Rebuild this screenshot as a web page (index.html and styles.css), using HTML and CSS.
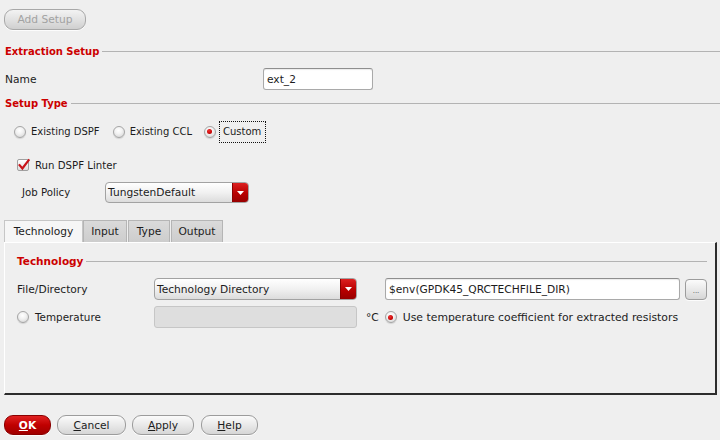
FILE: index.html
```html
<!DOCTYPE html>
<html>
<head>
<meta charset="utf-8">
<link rel="stylesheet" href="styles.css">
</head>
<body>
<div class="dialog">
  <div class="toolbar"><button class="btn btn-disabled add-btn" disabled>Add Setup</button></div>

  <div class="group-title title-extraction"><span>Extraction Setup</span></div>
  <div class="name-row">
    <span class="name-label">Name</span>
    <div class="textfield name-field">ext_2</div>
  </div>

  <div class="group-title title-setup"><span>Setup Type</span></div>
  <div class="radio-row">
    <span class="radio-item r1"><span class="radio"></span><span class="rlabel">Existing DSPF</span></span>
    <span class="radio-item r2"><span class="radio"></span><span class="rlabel">Existing CCL</span></span>
    <span class="radio-item r3"><span class="radio checked"></span><span class="rlabel focus">Custom</span></span>
  </div>

  <div class="check-row">
    <span class="checkbox"><svg width="14" height="14" viewBox="0 0 14 14"><path d="M2.6 7.2 L5.4 10.4 L11.6 2.2" fill="none" stroke="#c8141a" stroke-width="2.2" stroke-linecap="square"/></svg></span>
    <span class="check-label">Run DSPF Linter</span>
  </div>

  <div class="policy-row">
    <span class="policy-label">Job Policy</span>
    <div class="combo policy-combo">
      <span class="combo-text">TungstenDefault</span>
      <span class="combo-arrow"><svg width="7" height="4" viewBox="0 0 7 4"><path d="M0 0 H7 L3.5 4 Z" fill="#fff"/></svg></span>
    </div>
  </div>

  <div class="tabs">
    <div class="tab active tab-tech">Technology</div>
    <div class="tab tab-input">Input</div>
    <div class="tab tab-type">Type</div>
    <div class="tab tab-output">Output</div>
  </div>
  <div class="panel">
    <div class="group-title panel-title"><span>Technology</span></div>
    <div class="form-row file-row">
      <span class="form-label">File/Directory</span>
      <div class="combo tech-combo">
        <span class="combo-text">Technology Directory</span>
        <span class="combo-arrow"><svg width="7" height="4" viewBox="0 0 7 4"><path d="M0 0 H7 L3.5 4 Z" fill="#fff"/></svg></span>
      </div>
      <div class="textfield path-field">$env(GPDK45_QRCTECHFILE_DIR)</div>
      <button class="btn browse-btn">...</button>
    </div>
    <div class="form-row temp-row">
      <span class="form-label temp-label"><span class="radio"></span><span class="rlabel">Temperature</span></span>
      <div class="textfield field-disabled temp-field"></div>
      <span class="unit">°C</span>
      <span class="radio checked coef-radio"></span>
      <span class="coef-label">Use temperature coefficient for extracted resistors</span>
    </div>
  </div>

  <div class="buttons">
    <button class="btn btn-ok"><u>O</u>K</button>
    <button class="btn btn-cancel"><u>C</u>ancel</button>
    <button class="btn btn-apply"><u>A</u>pply</button>
    <button class="btn btn-help"><u>H</u>elp</button>
  </div>
</div>
</body>
</html>
```
FILE: styles.css
```css
* { box-sizing: border-box; }
html, body {
  margin: 0;
  padding: 0;
  background: #efefef;
}
body {
  width: 720px;
  height: 440px;
  overflow: hidden;
  font-family: "DejaVu Sans", sans-serif;
  font-size: 10.667px;
  color: #1c1c1c;
}
.dialog {
  display: flex;
  flex-direction: column;
}

/* generic buttons */
.btn {
  font-family: "DejaVu Sans", sans-serif;
  font-size: 10.667px;
  color: #1c1c1c;
  height: 20px;
  padding: 0;
  border: 1px solid #9c9c9c;
  border-radius: 9px;
  background: linear-gradient(#fbfbfb, #e9e9e9 50%, #d6d6d6);
  box-shadow: 0 1px 0 rgba(255,255,255,0.8);
  display: flex;
  align-items: center;
  justify-content: center;
}
.btn u { text-decoration: underline; text-underline-offset: 1px; }

.toolbar {
  padding: 9px 0 0 4px;
  display: flex;
}
.add-btn {
  width: 82px;
  height: 21px;
  color: #a2a2a2;
  border-color: #a8a8a8;
  background: linear-gradient(#f3f3f3, #e0e0e0 55%, #cfcfcf);
}

/* group titles */
.group-title {
  display: flex;
  align-items: center;
  height: 14px;
  padding-left: 5px;
  color: #cc0000;
  font-weight: bold;
  font-size: 10px;
}
.group-title::after {
  content: "";
  flex: 1;
  margin-left: 3px;
  border-top: 1px solid #b3b3b3;
}
.title-extraction { margin-top: 14px; }
.title-setup { margin-top: 6px; }

/* name row */
.name-row {
  display: flex;
  align-items: center;
  height: 22px;
  margin-top: 10px;
  padding-left: 5px;
}
.name-label { width: 258px; }
.textfield {
  height: 22px;
  background: #fff;
  border: 1px solid #a9a9a9;
  border-top-color: #8e8e8e;
  border-radius: 3px;
  display: flex;
  align-items: center;
  padding-left: 3px;
  box-shadow: inset 0 1px 1px rgba(0,0,0,0.08);
  white-space: nowrap;
}
.name-field { width: 110px; }

/* radios */
.radio-row {
  display: flex;
  align-items: center;
  height: 21px;
  margin-top: 11px;
  padding-left: 14px;
}
.radio-item {
  display: flex;
  align-items: center;
  height: 21px;
}
.radio {
  width: 12px;
  height: 12px;
  flex: none;
  border-radius: 50%;
  border: 1px solid #a5a5a5;
  background: radial-gradient(circle at 45% 35%, #ffffff 0%, #f2f2f2 40%, #cfcfcf 100%);
  box-shadow: 0 1px 1px rgba(0,0,0,0.12);
  position: relative;
}
.radio.checked::after {
  content: "";
  position: absolute;
  left: 2.5px;
  top: 2.5px;
  width: 5px;
  height: 5px;
  border-radius: 50%;
  background: radial-gradient(circle at 40% 35%, #f03030, #c00000 70%, #a00000);
}
.radio-item .rlabel { font-size: 10px; margin-left: 5px; }
.r2 { margin-left: 13px; }
.r3 { margin-left: 12px; }
.r3 .rlabel.focus {
  margin-left: 3px;
  height: 22px;
  padding: 0 4px 0 3px;
  border: 1px dotted #111;
  display: flex;
  align-items: center;
}

/* checkbox */
.check-row {
  display: flex;
  align-items: center;
  height: 16px;
  margin-top: 15px;
  padding-left: 17px;
}
.checkbox {
  width: 12px;
  height: 12px;
  border: 1px solid #a0a0a0;
  border-radius: 2px;
  background: linear-gradient(#ffffff, #dedede);
  position: relative;
  flex: none;
}
.checkbox svg {
  position: absolute;
  left: -1px;
  top: -2px;
}
.check-label { margin-left: 6px; font-size: 10.2px; }

/* combo */
.policy-row {
  display: flex;
  align-items: center;
  height: 21px;
  margin-top: 9px;
  padding-left: 22px;
}
.policy-label { width: 83px; font-size: 10.2px; }
.combo {
  height: 21px;
  display: flex;
  border: 1px solid #a2a2a2;
  border-radius: 4px;
  background: linear-gradient(#ffffff, #f1f1f1 50%, #dcdcdc);
  overflow: hidden;
}
.combo-text {
  flex: 1;
  display: flex;
  align-items: center;
  padding-left: 2px;
  white-space: nowrap;
}
.combo-arrow {
  width: 16px;
  display: flex;
  align-items: center;
  justify-content: center;
  background: linear-gradient(#dc2020, #b80000 55%, #980000);
  border-left: 1px solid #8a0000;
}
.policy-combo { width: 144px; }

/* tabs */
.tabs {
  display: flex;
  margin-top: 17px;
  padding-left: 4px;
  height: 22px;
}
.tab {
  height: 22px;
  display: flex;
  align-items: center;
  justify-content: center;
  background: linear-gradient(#dadada, #cdcdcd);
  border: 1px solid #b5b5b5;
  border-bottom: none;
}
.tab.active {
  background: #f6f6f6;
  border-color: #c6c6c6;
}
.tab-tech { width: 79px; }
.tab-input { width: 44px; }
.tab-type { width: 42px; margin-left: 1px; }
.tab-output { width: 52px; margin-left: 1px; }

.panel {
  margin-left: 4px;
  width: 713px;
  height: 153px;
  border-top: 1px solid #ffffff;
  border-left: 1px solid #ffffff;
  border-right: 2px solid #2c2c2c;
  border-bottom: 2px solid #2c2c2c;
  padding: 11px 8px 0 12px;
}
.panel-title { padding-left: 0; font-size: 10.5px; }

.form-row {
  display: flex;
  align-items: center;
  height: 22px;
}
.file-row { margin-top: 10px; }
.temp-row { margin-top: 6px; }
.form-label {
  width: 137px;
  flex: none;
  display: flex;
  align-items: center;
}
.temp-label .rlabel { margin-left: 6px; font-size: 10.4px; }
.tech-combo { width: 203px; height: 22px; }
.path-field { width: 295px; margin-left: 28px; height: 22px; }
.browse-btn {
  width: 22px;
  height: 21px;
  margin-left: 5px;
  border-radius: 4px;
  font-size: 7px;
  color: #555;
  padding-top: 3px;
}
.field-disabled {
  width: 203px;
  background: #dedede;
  border: 1px solid #c6c6c6;
  box-shadow: none;
}
.unit { margin-left: 9px; }
.coef-radio { margin-left: 6px; }
.coef-label { margin-left: 6px; font-size: 10.85px; }

/* bottom buttons */
.buttons {
  display: flex;
  margin-top: 20px;
  padding-left: 4px;
}
.buttons .btn { height: 20px; }
.btn-ok {
  width: 47px;
  color: #fff;
  font-weight: bold;
  border-color: #8a0000;
  background: linear-gradient(#e02222, #c00000 50%, #a00000);
}
.btn-cancel { width: 69px; margin-left: 6px; }
.btn-apply { width: 62px; margin-left: 6px; }
.btn-help { width: 57px; margin-left: 7px; }
```
